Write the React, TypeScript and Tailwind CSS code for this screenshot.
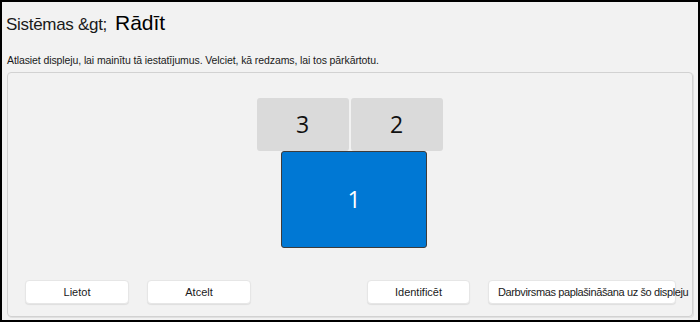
import React from 'react'

const btn =
  'h-[24px] rounded-[4px] bg-white border border-[#e6e6e6] shadow-[0_1px_1px_rgba(0,0,0,0.08)] text-[11px] text-[#1a1a1a] flex items-center whitespace-nowrap'

export default function App() {
  return (
    <div
      className="w-[700px] h-[322px] bg-[#f2f2f2] border-2 border-black flex flex-col overflow-hidden"
      style={{ fontFamily: '"Liberation Sans", Arial, sans-serif' }}
    >
      {/* Header */}
      <div className="flex items-baseline pl-[4px] pt-[5px] h-[34px]">
        <span className="text-[17px] text-[#1a1a1a] tracking-[-0.3px]">Sistēmas &amp;gt;</span>
        <span className="ml-[8px] text-[21px] font-medium text-black">Rādīt</span>
      </div>

      <p className="mt-[17px] pl-[5px] text-[10.5px] text-[#1a1a1a] tracking-[-0.1px] leading-[14px]">
        Atlasiet displeju, lai mainītu tā iestatījumus. Velciet, kā redzams, lai tos pārkārtotu.
      </p>

      {/* Display arrangement panel */}
      <div className="mt-[5px] ml-[5px] mr-[5px] mb-[3px] flex-1 rounded-[4px] border border-[#d2d2d2] shadow-[1px_1px_0_#e0e0e0] flex flex-col">
        <div className="pt-[25px] flex flex-col items-center">
          <div className="flex gap-[2px] pr-[1px]">
            <div className="w-[92px] h-[53px] rounded-[3px] bg-[#dadada] flex items-center justify-center text-[23px] text-[#111]" style={{ fontFamily: '"Open Sans", sans-serif' }}>
              3
            </div>
            <div className="w-[92px] h-[53px] rounded-[3px] bg-[#dadada] flex items-center justify-center text-[23px] text-[#111]" style={{ fontFamily: '"Open Sans", sans-serif' }}>
              2
            </div>
          </div>
          <div className="ml-[8px] w-[146px] h-[97px] rounded-[3px] bg-[#0078d4] border border-[#3c3c3c] flex items-center justify-center text-[23px] text-white" style={{ fontFamily: '"Open Sans", sans-serif' }}>
            1
          </div>
        </div>

        <div className="flex-1" />

        <div className="flex justify-between pl-[17px] pr-[16px] pb-[12px]">
          <div className="flex gap-[18px]">
            <button className={`${btn} w-[104px] justify-center`}>Lietot</button>
            <button className={`${btn} w-[104px] justify-center`}>Atcelt</button>
          </div>
          <div className="flex gap-[18px]">
            <button className={`${btn} w-[103px] justify-center`}>Identificēt</button>
            <button className={`${btn} w-[188px] justify-start pl-[9px] text-[10px] tracking-[-0.38px]`}>
              Darbvirsmas paplašināšana uz šo displeju
            </button>
          </div>
        </div>
      </div>
    </div>
  )
}
